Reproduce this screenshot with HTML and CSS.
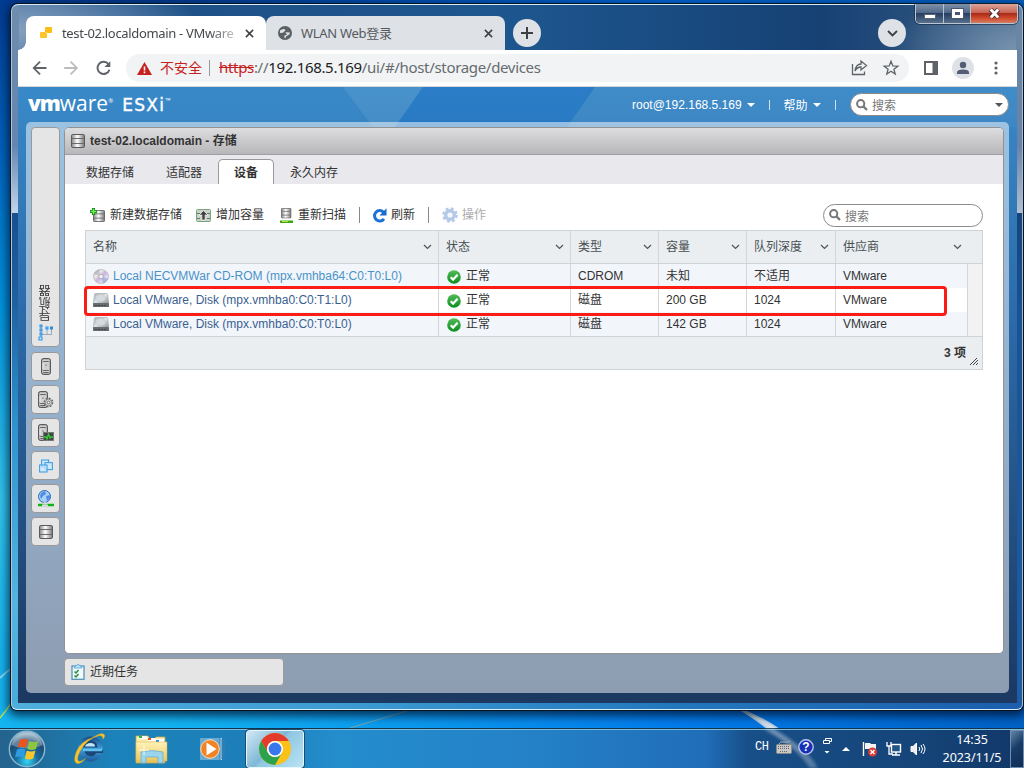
FILE: index.html
```html
<!DOCTYPE html>
<html lang="zh-CN">
<head>
<meta charset="utf-8">
<title>test-02.localdomain - VMware ESXi</title>
<link rel="stylesheet" href="styles.css">
</head>
<body>
<svg width="0" height="0" class="defs">
  <defs>
    <linearGradient id="metal" x1="0" x2="1" y1="0" y2="0"><stop offset="0" stop-color="#858585"/><stop offset=".45" stop-color="#fff"/><stop offset="1" stop-color="#777"/></linearGradient>
    <linearGradient id="disk" x1="0" x2="1" y1="0" y2="1"><stop offset="0" stop-color="#a8b0b5"/><stop offset=".5" stop-color="#dfe3e6"/><stop offset="1" stop-color="#8c9296"/></linearGradient>
    <linearGradient id="cdg" x1="0" x2="1" y1="0" y2="1"><stop offset="0" stop-color="#999"/><stop offset=".3" stop-color="#eee"/><stop offset=".5" stop-color="#c9b3e0"/><stop offset=".75" stop-color="#e8e4ee"/><stop offset="1" stop-color="#8b9fd0"/></linearGradient>
    <radialGradient id="orb" cx=".5" cy=".85" r=".8"><stop offset="0" stop-color="#35d6f5"/><stop offset=".4" stop-color="#176a9b"/><stop offset=".75" stop-color="#1d4b73"/><stop offset="1" stop-color="#9ab9cb"/></radialGradient>
    <linearGradient id="okg" x1="0" x2="0" y1="0" y2="1"><stop offset="0" stop-color="#54bb58"/><stop offset="1" stop-color="#0a8f1d"/></linearGradient>
    <linearGradient id="ieg" x1="0" x2="0" y1="0" y2="1"><stop offset="0" stop-color="#184d86"/><stop offset=".5" stop-color="#3d9ddb"/><stop offset="1" stop-color="#1e5a96"/></linearGradient>
    <linearGradient id="folder" x1="0" x2="0" y1="0" y2="1"><stop offset="0" stop-color="#fff2b8"/><stop offset="1" stop-color="#edc85f"/></linearGradient>
    <linearGradient id="streak" x1="0" x2="1" y1="0" y2="1"><stop offset="0" stop-color="#fff" stop-opacity=".4"/><stop offset="1" stop-color="#fff" stop-opacity=".25"/></linearGradient>
    <symbol id="db" viewBox="0 0 14 14"><rect x=".5" y=".5" width="13" height="13" rx="1.2" fill="url(#metal)" stroke="#5a5a5a"/><path d="M1 4.500h12M1 9.500h12" stroke="#6a6a6a"/></symbol>
    <symbol id="server" viewBox="0 0 10 17"><rect x=".7" y=".7" width="8.6" height="15.6" rx="1.5" fill="#cfcfcf" stroke="#3a3a3a"/><path d="M2.200 3.500h5.600M2.200 12.500h5.600M2.200 14.500h5.600" stroke="#666"/><path d="M2 5v6" stroke="#eee"/><circle cx="5" cy="7" r=".6" fill="#333"/></symbol>
    <symbol id="drive" viewBox="0 0 16 14"><path d="M2.500.5h11q1 0 1.200 1L15.700 10.500H.3L1.500 1.500q.1-1 1-1z" fill="url(#disk)" stroke="#a0a5a8" stroke-width=".6"/><ellipse cx="7.600" cy="5" rx="5" ry="3.600" fill="#d5dbdf" stroke="#b9bfc2" stroke-width=".5"/><rect y="10" width="16" height="4" rx=".5" fill="#666c70"/><path d="M2 12.500h2m1 0h2m1 0h2m1 0h2" stroke="#444"/></symbol>
    <symbol id="ok" viewBox="0 0 14 14"><circle cx="7" cy="7" r="6.8" fill="url(#okg)"/><path d="M3.700 7.200l2.400 2.400 4.500-4.800" fill="none" stroke="#fff" stroke-width="2.200"/></symbol>
    <symbol id="mag" viewBox="0 0 12 12"><circle cx="4.700" cy="4.700" r="3.600" fill="none" stroke="#777" stroke-width="2"/><path d="M7.400 7.400l3.600 3.600" stroke="#777" stroke-width="2.300"/></symbol>
    <symbol id="chev" viewBox="0 0 9 6"><path d="M1 1l3.500 3.400L8 1" fill="none" stroke="#555" stroke-width="1.300"/></symbol>
    <symbol id="close" viewBox="0 0 10 10"><path d="M1 1l8 8M9 1l-8 8" stroke="#3c4043" stroke-width="1.700"/></symbol>
  </defs>
</svg>
<div class="desktop">
  <svg class="wallpaper" width="1024" height="768" viewBox="0 0 1024 768"><path d="M0 678Q6 672 12 668" fill="none" stroke="#9be0f8" stroke-width="2" opacity=".8"/><path d="M0 718Q12 704 18 690" fill="none" stroke="#b8e04c" stroke-width="1.500"/><path d="M350 728L410 710" stroke="#78a5ab"/><path d="M737 708Q758 715 779 729H768Q752 716 737 708z" fill="#e6eaec" stroke="#c9d9e2" stroke-width="1.500" opacity=".9"/></svg>
  <main class="window">
    <div class="win-buttons">
      <span class="wb min"><i></i></span><span class="wb max"><i></i></span>
      <span class="wb x"><svg width="13" height="11" viewBox="0 0 13 11"><path d="M2.500 1.500l8 8m0-8l-8 8" stroke="#4c3337" stroke-width="4.600"/><path d="M2.800 1.500l7.400 8m0-8l-7.400 8" stroke="#fff" stroke-width="2.800"/></svg></span>
    </div>
    <div class="tabstrip">
      <div class="tab active"><svg class="favicon" width="14" height="14" viewBox="0 0 14 14"><rect x="6" y="1" width="7" height="6" rx="1" fill="#fdbc16"/><rect x="1" y="6" width="7" height="6" rx="1" fill="#fdc52c"/><path d="M6 7h2V6" fill="#fff" opacity=".6"/></svg><span class="tab-title">test-02.localdomain - VMware</span><svg class="tclose" width="9" height="9"><use href="#close"/></svg></div>
      <div class="tab idle"><svg class="favicon" width="14" height="14" viewBox="0 0 14 14"><circle cx="7" cy="7" r="7" fill="#5b6064"/><path d="M2 4.200L6 2.800l1.500 1.400L5 6.800 2 7M7.300 6.300l4.700.2-.7 2-3 1.800-1.300 2.400-1-3 3-1z" fill="#dee1e6"/></svg><span class="tab-title wlan">WLAN Web登录</span><svg class="tclose" width="9" height="9"><use href="#close"/></svg></div>
      <div class="circle plus"><svg width="12" height="12" viewBox="0 0 12 12"><path d="M6 0v12M0 6h12" stroke="#3c4043" stroke-width="2"/></svg></div>
      <div class="circle more"><svg width="11" height="7" viewBox="0 0 11 7"><path d="M1 1l4.500 4.500L10 1" fill="none" stroke="#3c4043" stroke-width="1.800"/></svg></div>
    </div>
    <div class="toolbar">
      <svg class="nav-icons" width="110" height="36" viewBox="0 0 110 36" fill="none" stroke-width="1.800"><path d="M29 18H16m6.500-6.500L16 18l6.500 6.500" stroke="#5f6368"/><path d="M47 18h13m-6.500-6.500L60 18l-6.500 6.500" stroke="#babcbe"/><path d="M92.200 14.200a6.200 6.200 0 1 0 .9 5.500" stroke="#5f6368" stroke-width="2"/><path d="M94 11v6h-6z" fill="#5f6368"/></svg>
      <div class="omnibox">
        <svg width="15" height="13" viewBox="0 0 15 13"><path d="M7.500 0L15 13H0z" fill="#c5221f"/><path d="M7.500 4.500v4M7.500 9.500v1.800" stroke="#fff" stroke-width="1.600"/></svg>
        <span class="unsafe">不安全</span><i class="sep"></i>
        <span class="url"><s>https</s>://<b>192.168.5.169</b>/ui/#/host/storage/devices</span>
        <svg class="share" width="50" height="20" viewBox="0 0 50 20" fill="none" stroke="#5f6368" stroke-width="1.300"><path d="M2.500 6v10.500h12v-3"/><path d="M5 13q1-7 6-7V3l5.500 4.500L11 12V9q-4 0-6 4z"/><path d="M41 3.300l1.800 4.600 5 .3-3.900 3 1.300 4.800L41 13.300 36.800 16l1.300-4.800-3.900-3 5-.3z"/></svg>
      </div>
      <svg class="sidepanel" width="14" height="14" viewBox="0 0 14 14"><rect x="1" y="1" width="12" height="12" fill="none" stroke="#5f6368" stroke-width="2"/><rect x="8.500" width="5" height="14" fill="#5f6368"/></svg>
      <span class="avatar"><svg width="14" height="14" viewBox="0 0 14 14" fill="#535d75"><circle cx="7" cy="4" r="3.200"/><path d="M1 13v-1.500Q1 8.500 7 8.500t6 3V13z"/></svg></span>
      <svg class="dots" width="4" height="14" fill="#5f6368"><circle cx="2" cy="2" r="1.600"/><circle cx="2" cy="7" r="1.600"/><circle cx="2" cy="12" r="1.600"/></svg>
    </div>
    <div class="page">
      <svg class="facets" width="999" height="40" viewBox="0 0 999 40"><path d="M325 0h80l-28 40h-22z" fill="#fff" opacity=".08"/><path d="M405 0h172l-28 40H377z" fill="#1f72c4" opacity=".55"/><path d="M577 0h422v40H549z" fill="#fff" opacity=".03"/></svg>
      <header class="masthead">
        <div class="logo"><b>vm</b><span class="ware">ware</span><sup class="reg">®</sup><span class="esxi">ESXi</span><sup class="tm">™</sup></div>
        <div class="account"><span class="user">root@192.168.5.169</span><i class="caret"></i><i class="bar"></i><span>帮助</span><i class="caret"></i><i class="bar second"></i></div>
        <div class="search top"><svg width="12" height="12"><use href="#mag"/></svg><span>搜索</span><i class="caret dark"></i></div>
      </header>
      <section class="shell">
        <nav class="rail">
          <div class="navigator"><span>导航器</span><svg width="16" height="17" viewBox="0 0 16 17" fill="none"><path d="M3 1v13M9 4v6M13.500 4v6M4 10.500h10" stroke="#8fa5b8" stroke-width=".9"/><g stroke="#2390e8"><rect x="2" y="1" width="2" height="2"/><rect x="2" y="5" width="2" height="2"/><rect x="2" y="9" width="2" height="2"/><rect x="1" y="13" width="3" height="3" fill="#d5ebfa"/><rect x="8" y="3" width="2" height="2"/><rect x="12.500" y="3" width="2" height="2"/></g></svg></div>
          <a><svg width="10" height="17"><use href="#server"/></svg></a>
          <a><svg width="16" height="17" viewBox="0 0 16 17"><use href="#server" width="10" height="17"/><circle cx="10.500" cy="11.500" r="4" fill="#ddd" stroke="#666" stroke-width="1.800" stroke-dasharray="1.800 1.300"/><circle cx="10.500" cy="11.500" r="3.200" fill="#ddd" stroke="#777" stroke-width=".8"/><circle cx="10.500" cy="11.500" r="1.300" fill="#fff" stroke="#666"/></svg></a>
          <a><svg width="16" height="17" viewBox="0 0 16 17"><use href="#server" width="10" height="17"/><rect x="5.500" y="8.500" width="10" height="8" fill="#454545" stroke="#777"/><path d="M6 13h2l1 2 1.500-5 1.500 4 1-1h2" fill="none" stroke="#35c935" stroke-width="1.300"/></svg></a>
          <a><svg width="14" height="14" viewBox="0 0 14 14" fill="#cfe9fb" stroke="#419fe6" stroke-width="1.100"><rect x="2.600" y="1" width="7" height="7"/><rect x="6" y="3.600" width="7.400" height="7"/><rect x=".6" y="6" width="7.400" height="7" fill-opacity=".75"/></svg></a>
          <a><svg width="16" height="17" viewBox="0 0 16 17"><circle cx="6.500" cy="6.500" r="6" fill="#a9d2fb" stroke="#2467bd"/><path d="M3 3l4-2 1 3-3 2-2 3-1-3zM8 6l4-1v3l-3 3z" fill="#528ce0"/><path d="M0 15h16" stroke="#10b319" stroke-width="2.500"/><path d="M4 15.500h6M5.500 13.200h3" stroke="#ddd" stroke-width="2"/></svg></a>
          <a><svg width="14" height="14"><use href="#db"/></svg></a>
        </nav>
        <div class="content">
          <article class="panel">
            <div class="panel-head"><svg width="14" height="14"><use href="#db"/></svg><span>test-02.localdomain - 存储</span></div>
            <div class="panel-tabs"><span>数据存储</span><span>适配器</span><span class="on">设备</span><span>永久内存</span></div>
            <div class="actions">
              <svg class="a1" width="15" height="15" viewBox="0 0 15 15"><use href="#db" x="3" y="2" width="12" height="12"/><path d="M3.500 0v7M0 3.500h7" stroke="#138b19" stroke-width="3"/><path d="M3.500.7v5.600M.7 3.500h5.600" stroke="#72ef55" stroke-width="1.400"/></svg><span class="label wide">新建数据存储</span>
              <svg class="a2" width="15" height="13" viewBox="0 0 15 13"><rect x=".5" y=".5" width="14" height="12" rx="1" fill="#ccd1cc" stroke="#74a77d"/><path d="M1 4.500h3M11 4.500h3M1 9.500h3M11 9.500h3" stroke="#5b7d62"/><path d="M7.500 1.500L12 6H9.200v5H5.800V6H3z" fill="#444" stroke="#fff" stroke-width=".7"/></svg><span class="label wide">增加容量</span>
              <svg class="a3" width="15" height="15" viewBox="0 0 15 15"><use href="#db" x="2" y="0" width="10.500" height="10.500"/><path d="M1 13.800h13" stroke="#3aa914" stroke-width="2.400"/><path d="M3 13.500h6" stroke="#b5e63a"/></svg><span class="label">重新扫描</span>
              <i class="divide d1"></i>
              <svg class="a4" width="15" height="15" viewBox="0 0 15 15"><path d="M11.500 4.200A5.200 5.200 0 1 0 12 10.800" fill="none" stroke="#1d72d6" stroke-width="3"/><path d="M14.500.3v7.200H7.500z" fill="#156bd0"/></svg><span class="label">刷新</span>
              <i class="divide d2"></i>
              <svg class="a5" width="16" height="16" viewBox="0 0 16 16"><circle cx="8" cy="8" r="6.300" fill="none" stroke="#b5cae8" stroke-width="3" stroke-dasharray="2.700 2.250"/><circle cx="8" cy="8" r="4.300" fill="#f6f8fc" stroke="#b5cae8" stroke-width="3.400"/></svg><span class="label off">操作</span>
              <div class="search"><svg width="12" height="12"><use href="#mag"/></svg><span>搜索</span></div>
            </div>
            <div class="grid">
              <div class="row head"><span>名称<svg width="9" height="6"><use href="#chev"/></svg></span><span>状态<svg width="9" height="6"><use href="#chev"/></svg></span><span>类型<svg width="9" height="6"><use href="#chev"/></svg></span><span>容量<svg width="9" height="6"><use href="#chev"/></svg></span><span>队列深度<svg width="9" height="6"><use href="#chev"/></svg></span><span class="last">供应商<svg width="9" height="6"><use href="#chev"/></svg></span></div>
              <div class="row"><span class="name light"><svg width="16" height="15" viewBox="0 0 16 15"><ellipse cx="8" cy="7.500" rx="7.500" ry="7" fill="url(#cdg)" stroke="#b0b0b0" stroke-width=".7"/><path d="M8 7.500L1 5q2-4 5-4.600z" fill="#999" opacity=".4"/><path d="M8 7.500l7 2q-2 4-5 5z" fill="#8b9be0" opacity=".6"/><circle cx="8" cy="7.500" r="2.300" fill="#eee" stroke="#aaa" stroke-width=".8"/></svg><em class="cd">Local NECVMWar CD-ROM (mpx.vmhba64:C0:T0:L0)</em></span><span class="st"><svg width="14" height="14"><use href="#ok"/></svg>正常</span><span>CDROM</span><span>未知</span><span>不适用</span><span>VMware</span><span class="gutter"></span></div>
              <div class="row white"><span class="name"><svg width="16" height="14"><use href="#drive"/></svg><em>Local VMware, Disk (mpx.vmhba0:C0:T1:L0)</em></span><span class="st"><svg width="14" height="14"><use href="#ok"/></svg>正常</span><span>磁盘</span><span>200 GB</span><span>1024</span><span>VMware</span><span class="gutter"></span></div>
              <div class="row"><span class="name"><svg width="16" height="14"><use href="#drive"/></svg><em>Local VMware, Disk (mpx.vmhba0:C0:T0:L0)</em></span><span class="st"><svg width="14" height="14"><use href="#ok"/></svg>正常</span><span>磁盘</span><span>142 GB</span><span>1024</span><span>VMware</span><span class="gutter"></span></div>
              <div class="foot"><span>3 项</span><svg width="8" height="7" viewBox="0 0 8 7"><path d="M0 7l7-7M3 7l5-5M6 7l2-2" stroke="#444"/></svg></div>
              <div class="highlight"></div>
            </div>
          </article>
          <div class="tasks"><svg width="14" height="16" viewBox="0 0 14 16"><rect x="1" y="2" width="12" height="13.300" fill="#f2f8fb" stroke="#5595b7" stroke-width="1.300"/><path d="M3 4q0-1.600 2-2 .5-1.500 2-1.500T9 2q2 .4 2 2z" fill="#bfe0f4" stroke="#57a5d8" stroke-width=".8"/><path d="M3.500 7.500L5 9l2.500-3M3.500 11.500L5 13l2.500-3" fill="none" stroke="#23923a" stroke-width="1.500"/></svg><span>近期任务</span></div>
        </div>
      </section>
    </div>
  </main>
  <footer class="taskbar">
    <svg class="beam" width="120" height="39" viewBox="0 0 120 39"><path d="M64 0H74Q106 18 118 39H110Q96 18 64 0z" fill="url(#streak)"/></svg>
    <svg class="orb" width="38" height="38" viewBox="0 0 38 38"><circle cx="19" cy="19" r="17.700" fill="url(#orb)" stroke="#8bb7cf" stroke-width="1.400"/><path d="M3.500 15Q7 3 19 3t15.500 12Q20 22 3.500 15z" fill="#fff" opacity=".3"/><path d="M12 10q4.500-2.500 8 0l-2 8q-4-2-8.500-.5z" fill="#e9541f"/><path d="M21.300 11q4 2 9 0l-2.300 8q-4 2-8.700 0z" fill="#8dc63f"/><path d="M9 19.500q4-2 8.500 0l-2 8q-4-2-8.500 0z" fill="#2f9ce2"/><path d="M18.800 20.500q4 2 8.700 0l-2.200 8q-4 2-8.500 0z" fill="#fbc52c"/></svg>
    <svg class="ie" width="33" height="33" viewBox="0 0 33 33"><circle cx="17.500" cy="17" r="12.500" fill="url(#ieg)"/><path d="M10 15.500q1-7 7.500-7t7 7z" fill="#1b4879"/><path d="M12 14.500q1-3.500 5.500-3.500t4.500 3.500z" fill="#bfe6f7"/><path d="M11 18h19v3h-7q-2 4-6 3-5-.5-6-6z" fill="#1b4879"/><path d="M10 18h19" stroke="#60c2ee" stroke-width="2.500"/><path d="M20 5.500Q29 -.5 31.500 3q.5 2-1.500 4 0-4-4-3.500Q13 7 6.500 20q-4 9 0 9.500 3 0 6-3-4 5-8 5-5-1-1-12Q8 9.500 20 5.500z" fill="#f7c531" stroke="#e3a91b" stroke-width=".6"/></svg>
    <svg class="explorer" width="33" height="30" viewBox="0 0 33 30"><path d="M1 29V2h12l2 3h5l1-2h9v26z" fill="url(#folder)" stroke="#c8a348" stroke-width=".8"/><path d="M4 2h8v3H4zM13 4h8v3h-8zM21 5h8v3h-8z" fill="#fff"/><path d="M4 2h3v2H4z" fill="#27b34b"/><path d="M13 4h3v2h-3z" fill="#e34c29"/><path d="M21 6h3v2h-3z" fill="#3b8ee0"/><path d="M1 8h31v19H1z" fill="url(#folder)" stroke="#d7b24e" stroke-width=".5"/><path d="M6 29V18q10-3 22 0v11h-5v-6H11v6z" fill="#9bd4ec" stroke="#6caecb" stroke-width=".8"/><path d="M9 11v10M4 16h10" stroke="#fff" opacity=".8"/></svg>
    <svg class="wmp" width="30" height="26" viewBox="0 0 30 26"><path d="M1 2h20v22H1z" fill="#78b5d9" opacity=".8"/><path d="M21 2h2v22h-2z" fill="#a6d8ee"/><path d="M21 2v22M23 3v20M25 4v18" stroke="#407fae"/><circle cx="11" cy="13" r="9.300" fill="#f28322" stroke="#fbe1c6"/><path d="M7.500 6.500l10 6.500-10 6.500z" fill="#fff"/></svg>
    <div class="task-on"><svg width="32" height="32" viewBox="0 0 32 32"><circle cx="16" cy="16" r="16" fill="#fbc116"/><path d="M2.150 8A16 16 0 0 1 29.860 8H16a8 8 0 0 0-7 12z" fill="#e33b2e"/><path d="M2.150 8l6.930 12A8 8 0 0 0 16 24l6.900-4L16 32A16 16 0 0 1 2.150 8z" fill="#2da24c"/><circle cx="16" cy="16" r="8" fill="#fff"/><circle cx="16" cy="16" r="6.400" fill="#3878ec"/></svg></div>
    <div class="tray">
      <span class="ch">CH</span>
      <svg class="kb" width="16" height="14" viewBox="0 0 16 14"><path d="M3 4Q4 1 8 2t6-1" fill="none" stroke="#aaa"/><rect x=".5" y="4.500" width="15" height="9" rx="1" fill="#c7c7c7" stroke="#888"/><path d="M2 6.500h12M2 8.500h12M4 11.500h8" stroke="#666" stroke-dasharray="1 1"/></svg>
      <svg class="help" width="16" height="16" viewBox="0 0 16 16"><circle cx="8" cy="8" r="7.200" fill="#1530b9" stroke="#b9c3e9" stroke-width="1.400"/><text x="8" y="12" text-anchor="middle" class="q">?</text></svg>
      <svg class="restore" width="9" height="20" viewBox="0 0 9 20"><path d="M2.500 3.500V1.500h6v3h-2M.5 3.500h6v3h-6z" fill="none" stroke="#fff"/><path d="M1.500 14h5L4 16.500z" fill="#fff"/></svg>
      <svg class="up" width="8" height="5"><path d="M0 5l4-4 4 4z" fill="#fff"/></svg>
      <svg class="flag" width="16" height="16" viewBox="0 0 16 16"><path d="M1.500 1v14" stroke="#fff" stroke-width="1.400"/><path d="M3 2h5l1 1h5v6H8L7 8H3z" fill="#f5f5f5"/><circle cx="10.500" cy="11" r="4.500" fill="#dc3b32"/><path d="M8.500 9l4 4m0-4l-4 4" stroke="#fff" stroke-width="1.400"/></svg>
      <svg class="net" width="16" height="16" viewBox="0 0 16 16"><path d="M1 1v4h4V1M3 5v8h4" fill="none" stroke="#fff" stroke-width="1.300"/><rect x="5.500" y="3.500" width="9" height="7.500" fill="#215487" stroke="#fff" stroke-width="1.400"/><path d="M6 14h8M10 11v3" stroke="#fff" stroke-width="1.500"/></svg>
      <svg class="vol" width="16" height="14" viewBox="0 0 16 14"><path d="M1 4.500h2L6.500 1v12L3 9.500H1z" fill="#eee" stroke="#fff"/><path d="M9 5q1.500 2 0 4m2-6q3 4 0 8m2-9q4 5 0 10" fill="none" stroke="#fff"/></svg>
      <div class="clock"><span class="time">14:35</span><span class="date">2023/11/5</span></div>
      <i class="peek"></i>
    </div>
  </footer>
</div>
</body>
</html>
```
FILE: styles.css
```css
* { box-sizing: border-box; }
body { margin: 0; font-family: "Liberation Sans", "Noto Sans CJK SC", sans-serif; font-size: 12px; color: #333; overflow: hidden; }
svg { display: block; flex: none; }
i, em { font-style: normal; }
.defs { position: absolute; }
.desktop { position: relative; width: 1024px; height: 768px; display: flex; flex-direction: column; justify-content: space-between; overflow: hidden; background: linear-gradient(90deg, transparent 15%, rgba(0,115,235,.85) 65%, #0060c5 100%), linear-gradient(#003b92, #0063bd 20%, #0093dc 40%, #31c4ec 65%, #16b4ed 85%, #11b4f2); }
.wallpaper { position: absolute; left: 0; top: 0; }

.window { position: relative; width: 1012px; height: 706px; margin: 4px 0 0 11px; padding: 0 5px 6px 6px; border: 1px solid #d7edf6; border-left-color: #a7c8de; border-right-color: #a5bdd0; border-radius: 7px 7px 6px 6px; display: flex; flex-direction: column; box-shadow: 0 0 0 1px #061526, 0 3px 10px 3px rgba(0,15,40,.75); background: linear-gradient(90deg, #4fb0dd, #3d9bd3 33%, #2378bd 65%, #1b5eae 100%) 0 100% / 100% 6px no-repeat, linear-gradient(#6f8dad, #6685b0 20%, #c2d5e8 29.5%, #19508f 29.6%, #1e60a0 42%, #2f93d0 60%, #56b5df 85%, #49abd9) 0 0 / 7px 100% no-repeat, linear-gradient(#6a86a3, #6983a8 20%, #b3bfd0 29.5%, #17437b 29.6%, #1a5394 45%, #1e5ca4) 100% 0 / 6px 100% no-repeat, radial-gradient(ellipse 130px 65px at 100% 45px, #7995b1, transparent), radial-gradient(ellipse 190px 60px at 0 25px, #86a1bf, transparent), linear-gradient(90deg, #36659a, #1e5187 18%, #1d568e 50%, #164174 80%, #3c5e83); }
.win-buttons { position: absolute; right: 4px; top: -1px; height: 20px; width: 103px; display: flex; border: 1px solid #b9c7d5; border-top: 0; border-radius: 0 0 5px 5px; overflow: hidden; box-shadow: 0 0 0 1px rgba(18,38,64,.6); }
.wb { display: flex; align-items: center; justify-content: center; background: linear-gradient(#7f91a8, #526a89 45%, #243d60 48%, #59708d); border-right: 1px solid #b5c2cf; }
.wb.min { width: 28px; padding-top: 5px; }
.wb.max { width: 27px; }
.wb.x { flex: 1; border: 0; background: linear-gradient(#dba59a, #c86454 45%, #a52716 48%, #d14c2c 75%, #d47d66); }
.min i { width: 12px; height: 5px; background: #fff; border: 1px solid #58657b; }
.max i { width: 11px; height: 9px; border: 3px solid #fff; background: #4c5870; outline: 1px solid #4c5870; }
.tabstrip { height: 45px; padding-left: 8px; display: flex; align-items: flex-end; font-family: "Noto Sans", "Noto Sans CJK SC", sans-serif; font-size: 13px; }
.tab { position: relative; height: 34px; border-radius: 8px 8px 0 0; display: flex; align-items: center; padding: 0 12px 0 13px; }
.tab.active { width: 240px; background: #fff; color: #45484c; }
.tab.active::before { content: ""; position: absolute; width: 8px; height: 8px; left: -8px; bottom: 0; background: radial-gradient(circle at 0 0, transparent 7.5px, #fff 8px); }
.tab.idle { width: 239px; background: #dee1e6; color: #55595e; padding-left: 12px; }
.tab-title { width: 175px; margin-left: 9px; white-space: nowrap; letter-spacing: -.33px; -webkit-mask-image: linear-gradient(90deg, #000 84%, rgba(0,0,0,.25)); }
.idle .tab-title { -webkit-mask-image: none; letter-spacing: -.3px; }
.idle .tab-title, .active .tab-title { margin-top: -1px; }
.tclose { margin-left: auto; }
.circle { width: 28px; height: 28px; margin: 0 0 3px 8px; border-radius: 50%; background: #dee1e6; display: flex; align-items: center; justify-content: center; }
.circle.more { margin-left: 337px; }
.toolbar { height: 37px; flex: none; display: flex; align-items: center; background: #fff; border-bottom: 1px solid #d5d7d9; font-family: "Noto Sans", "Noto Sans CJK SC", sans-serif; }
.nav-icons { width: 108px; }
.omnibox { width: 783px; height: 28px; border-radius: 14px; background: #f1f3f4; display: flex; align-items: center; padding-left: 11px; font-size: 14px; color: #666b70; }
.unsafe { margin-left: 8px; margin-top: -2px; width: 43px; white-space: nowrap; color: #c5221f; }
.sep { width: 1px; height: 16px; margin: 0 9px 0 6px; background: #999; }
.url { letter-spacing: -.32px; font-size: 15px; margin-top: -2px; }
.url s { color: #c5221f; }
.url b { font-weight: 400; color: #202124; }
.share { margin-left: auto; margin-right: 9px; }
.sidepanel { margin-left: 15px; }
.avatar { width: 22px; height: 22px; margin-left: 14px; border-radius: 50%; background: #dee1e6; display: flex; align-items: center; justify-content: center; }
.dots { margin-left: 20px; }

.page { position: relative; flex: 1; min-height: 0; display: flex; flex-direction: column; padding: 0 8px 10px; background: linear-gradient(#3989c8, #2c6aa8 38%, #1b3961); }
.facets { position: absolute; top: 0; left: 0; }
.masthead { height: 35px; flex: none; position: relative; display: flex; align-items: center; color: #fff; }
.logo { display: flex; align-items: baseline; width: 606px; flex: none; padding-left: 2px; font-family: "Open Sans", sans-serif; font-size: 21px; line-height: 30px; margin-top: -2px; }
.logo b { font-weight: 800; letter-spacing: -1px; }
.ware { letter-spacing: 0; }
.logo sup { font-size: 7px; line-height: 8px; align-self: flex-start; margin-top: 9px; }
.logo .reg { font-size: 6px; }
.esxi { margin-left: 9px; font-family: "DejaVu Sans", sans-serif; font-size: 17px; letter-spacing: 1.3px; -webkit-text-stroke: .4px #fff; }
.account { display: flex; align-items: center; width: 218px; flex: none; }
.caret { border: 4px solid transparent; border-top-color: #fff; border-bottom: 0; margin-left: 5px; }
.bar { width: 1px; height: 10px; margin: 0 14px 0 14px; background: #cde2f2; }
.bar.second { margin-right: 0; }
.search { width: 160px; height: 23px; flex: none; display: flex; align-items: center; padding: 0 7px 0 5px; border: 1px solid #8b8b8b; border-radius: 12px; background: #fff; color: #777; }
.search.top { width: 159px; }
.search span { margin-left: 4px; }
.caret.dark { border-top-color: #555; margin-left: auto; margin-right: -2px; }
.shell { position: relative; flex: 1; min-height: 0; border-radius: 5px; background: rgba(255,255,255,.5); display: flex; padding: 5px 5px 7px; gap: 4px; }
.rail { width: 29px; display: flex; flex-direction: column; gap: 4px; }
.rail a, .navigator { height: 29px; border: 1px solid #999; border-radius: 4px; background: #e5e5e5; display: flex; align-items: center; justify-content: center; }
.rail .navigator { height: 220px; flex-direction: column; justify-content: flex-end; padding-bottom: 5px; gap: 3px; margin-bottom: 1px; }
.navigator span { writing-mode: vertical-rl; transform: rotate(180deg); line-height: 14px; }
.content { flex: 1; min-width: 0; display: flex; flex-direction: column; gap: 4px; }
.panel { height: 527px; background: #fff; border: 1px solid #929292; border-radius: 5px; overflow: hidden; }
.panel-head { height: 27px; display: flex; align-items: center; gap: 5px; padding-left: 6px; background: linear-gradient(#dddde0, #b7b7ba); border-bottom: 1px solid #a0a0a3; font-weight: 700; }
.panel-head span { margin-top: -3px; }
.panel-tabs { height: 29px; display: flex; align-items: flex-end; background: #e8e8ed; padding-left: 5px; }
.panel-tabs span { height: 25px; padding: 0 15px; line-height: 26px; border: 1px solid transparent; border-bottom: 0; margin-right: -2px; width: 82px; white-space: nowrap; }
.panel-tabs span:nth-child(2) { width: 70px; padding-left: 15px; }
.panel-tabs .on { width: 56px; background: #fff; border-color: #999; border-radius: 5px 5px 0 0; font-weight: 700; margin-right: 0; }
.actions { height: 46px; padding: 16px 20px 0 25px; display: flex; align-items: center; white-space: nowrap; }
.label { margin-left: 4px; margin-top: -3px; }
.label.wide { margin-left: 5px; }
.off { color: #aaa; }
.a2 { margin-left: 14px; } .a3 { margin-left: 15px; } .a4 { margin-left: 12px; } .a5 { margin-left: 13px; }
.divide { width: 1px; height: 16px; margin-left: 13px; background: #888; }
.actions .search { margin-left: auto; }
.grid { position: relative; width: 898px; height: 140px; margin-left: 20px; border: 1px solid #d0d3d5; background: #eaeef1; }
.row { height: 24px; display: grid; grid-template-columns: 353px 132px 88px 88px 89px 132px 14px; background: #f2f6fb; line-height: 23px; }
.row.white { background: #fff; }
.row > span { display: flex; align-items: center; padding-left: 7px; border-right: 1px solid #d5d5d5; white-space: nowrap; }
.row > .st { padding-left: 8px; }
.row > .gutter { background: #f2f2f2; border: 0; }
.row.head { height: 33px; background: transparent; border-bottom: 1px solid #d0d3d5; color: #484e52; }
.row.head span svg { margin-left: auto; margin-right: 6px; }
.row.head .last { border: 0; }
.row em { margin-left: 4px; color: #3a6090; }
.row em.cd { color: #4a92c8; }
.st svg { margin-right: 5px; position: relative; top: 1px; }
.foot { height: 33px; border-top: 1px solid #d0d3d5; display: flex; justify-content: flex-end; gap: 4px; padding-right: 4px; font-weight: 700; line-height: 32px; }
.foot svg { margin-top: 21px; }
.highlight { position: absolute; left: -2px; top: 55px; width: 863px; height: 30px; border: 3px solid #fc1c16; border-radius: 4px; }
.tasks { width: 220px; height: 28px; display: flex; align-items: center; gap: 5px; padding-left: 6px; background: #e5e5e5; border: 1px solid #9b9b9b; border-radius: 4px; }
.tasks span { margin-top: -3px; }

.taskbar { position: relative; height: 40px; flex: none; display: flex; align-items: center; border-top: 1px solid #15344c; box-shadow: inset 0 1px #79bfe2; background: linear-gradient(90deg, #24638d, #1c82ba 11%, #1d7fb9 24%, #248dcc 33%, #2481c8 52%, #206db8 69%, #184f88 73%, #154478 90%, #123768); }
.beam { position: absolute; left: 700px; top: 0; filter: blur(1.5px); }
.orb { margin-left: 8px; }
.ie { margin-left: 27px; }
.explorer { margin-left: 29px; }
.wmp { margin-left: 31px; }
.task-on { width: 58px; height: 38px; margin-left: 17px; display: flex; align-items: center; justify-content: center; border: 1px solid #e7f6fd; outline: 1px solid #1b4d6e; border-radius: 3px; background: linear-gradient(135deg, #d2e9f4, #7fb7d8 45%, #90c7e2 50%, #b8e3f3); }
.tray { position: relative; margin-left: auto; display: flex; align-items: center; height: 100%; color: #fff; }
.ch { font: 12px "Liberation Mono", monospace; width: 14px; letter-spacing: -.4px; margin-top: -3px; }
.kb { margin-left: 7px; } .help { margin-left: 6px; } .restore { margin-left: 9px; } .up { margin-left: 10px; } .flag { margin-left: 12px; } .net { margin-left: 8px; } .vol { margin-left: 8px; }
.kb, .help, .restore { transform: translateY(-2px); }
.q { font: bold 12px "Liberation Sans", sans-serif; fill: #fff; }
.clock { width: 74px; margin-left: 9px; margin-right: 1px; display: flex; flex-direction: column; align-items: center; font: 12.5px/18px "Noto Sans", sans-serif; letter-spacing: -.05px; }
.peek { width: 14px; height: 38px; border: 1px solid #6d8eb0; background: linear-gradient(135deg, #6584a6, #183c68 45%, #0f2c55); }
```
